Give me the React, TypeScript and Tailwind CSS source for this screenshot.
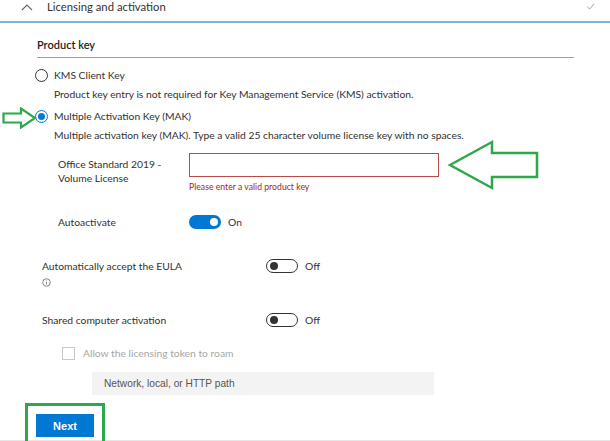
import React from 'react';

const font = { fontFamily: '"Segoe UI", Lato, "Noto Sans", sans-serif' };
const arial = { fontFamily: '"Liberation Sans", Arial, sans-serif' };

const Toggle: React.FC<{ on: boolean; label: string }> = ({ on, label }) => (
  <div className="flex items-center gap-[7px] h-[14px]">
    <div
      className={`w-[32px] h-[14px] rounded-full flex items-center px-[3px] ${
        on ? 'bg-[#0078d4] justify-end' : 'border border-[#333] justify-start'
      }`}
    >
      <div className={`w-[8px] h-[8px] rounded-full ${on ? 'bg-white' : 'bg-[#333]'}`} />
    </div>
    <span className="text-[10.3px] text-[#333]">{label}</span>
  </div>
);

export default function App() {
  return (
    <div
      className="relative w-[610px] h-[441px] bg-white overflow-hidden text-[#323130] text-[10.3px] leading-[14px]"
      style={font}
    >
      {/* header */}
      <div className="h-[23px] flex items-start border-b-2 border-[#7eb3d6] pl-[21px] pr-[15px]">
        <svg width="12" height="8" viewBox="0 0 12 8" className="mt-[3px]">
          <path d="M1 7 L6 2 L11 7" fill="none" stroke="#666" strokeWidth="1.1" />
        </svg>
        <span className="ml-[14px] text-[11.3px] leading-[14px] text-[#333]">Licensing and activation</span>
        <svg width="9" height="7" viewBox="0 0 10 8" className="ml-auto mt-[3px]">
          <path d="M1 4 L4 7 L9 1" fill="none" stroke="#999" strokeWidth="1" />
        </svg>
      </div>

      <div className="pl-[35px]">
        <div className="ml-[2px] pt-[15px] pb-[5px] text-[11px] font-semibold text-[#222]">Product key</div>
        <div className="ml-[2px] w-[537px] h-px bg-[#a0a0a0]" />

        {/* KMS */}
        <div className="mt-[10px] flex items-center gap-[6px] h-[14px]">
          <div className="w-[13px] h-[13px] rounded-full border border-[#333]" />
          <span>KMS Client Key</span>
        </div>
        <div className="ml-[19px] mt-[5px]">
          Product key entry is not required for Key Management Service (KMS) activation.
        </div>

        {/* MAK */}
        <div className="mt-[8px] flex items-center gap-[6px] h-[14px]">
          <div className="w-[13px] h-[13px] rounded-full border border-[#0078d4] flex items-center justify-center">
            <div className="w-[7px] h-[7px] rounded-full bg-[#0078d4]" />
          </div>
          <span>Multiple Activation Key (MAK)</span>
        </div>
        <div className="ml-[19px] mt-[5px] whitespace-nowrap">
          Multiple activation key (MAK). Type a valid 25 character volume license key with no spaces.
        </div>

        {/* key input */}
        <div className="flex mt-[11px] pl-[23px]">
          <div className="w-[131px] pt-[4px]">
            Office Standard 2019 -<br />Volume License
          </div>
          <div>
            <div className="w-[250px] h-[24px] border border-[#b94a48]" />
            <div className="mt-[5px] text-[8.7px] leading-[10px] text-[#a4262c]">Please enter a valid product key</div>
          </div>
        </div>

        <div className="flex items-center mt-[23px] pl-[23px]">
          <div className="w-[131px]">Autoactivate</div>
          <Toggle on label="On" />
        </div>

        <div className="flex mt-[30px] pl-[7px]">
          <div className="w-[224px]">
            <div>Automatically accept the EULA</div>
            <svg width="9" height="9" viewBox="0 0 10 10" className="mt-[5px]">
              <circle cx="5" cy="5" r="4.2" fill="none" stroke="#555" strokeWidth="0.8" />
              <path d="M5 4.3 V7.2" stroke="#555" strokeWidth="0.8" />
              <circle cx="5" cy="3" r="0.5" fill="#555" />
            </svg>
          </div>
          <Toggle on={false} label="Off" />
        </div>

        <div className="flex items-center mt-[26px] pl-[7px]">
          <div className="w-[224px]">Shared computer activation</div>
          <Toggle on={false} label="Off" />
        </div>

        <div className="flex items-center gap-[8px] mt-[19px] pl-[27px] h-[14px]">
          <div className="w-[13px] h-[13px] border border-[#c8c8c8]" />
          <span className="text-[#a6a6a6]">Allow the licensing token to roam</span>
        </div>

        <div
          className="ml-[57px] mt-[12px] w-[342px] h-[23px] bg-[#f3f3f3] flex items-center pl-[12px] text-[10.2px] text-[#555]"
          style={arial}
        >
          Network, local, or HTTP path
        </div>
      </div>

      {/* bottom rule */}
      <div className="absolute left-0 right-0 bottom-0 h-[1px] bg-[#e6e6e6]" />

      {/* Next */}
      <div className="absolute left-[25px] top-[403px] w-[80px] h-[41px] border-[3px] border-[#2ea84a] pl-[8px] pt-[8px]">
        <button className="w-[58px] h-[23px] bg-[#0078d4] text-white text-[11px] font-bold" style={arial}>
          Next
        </button>
      </div>

      {/* green annotation arrows */}
      <svg className="absolute left-[2px] top-[107px]" width="36" height="22" viewBox="0 0 36 22">
        <path d="M1.5 6.5 H19 V1.5 L33 11 L19 20.5 V15.5 H1.5 Z" fill="none" stroke="#2ea84a" strokeWidth="2.2" />
      </svg>
      <svg className="absolute left-[446px] top-[139px]" width="96" height="54" viewBox="0 0 96 54">
        <path d="M4 26 L46 3 V14 H91 V38 H46 V49 Z" fill="none" stroke="#2ea84a" strokeWidth="2.5" />
      </svg>
    </div>
  );
}
